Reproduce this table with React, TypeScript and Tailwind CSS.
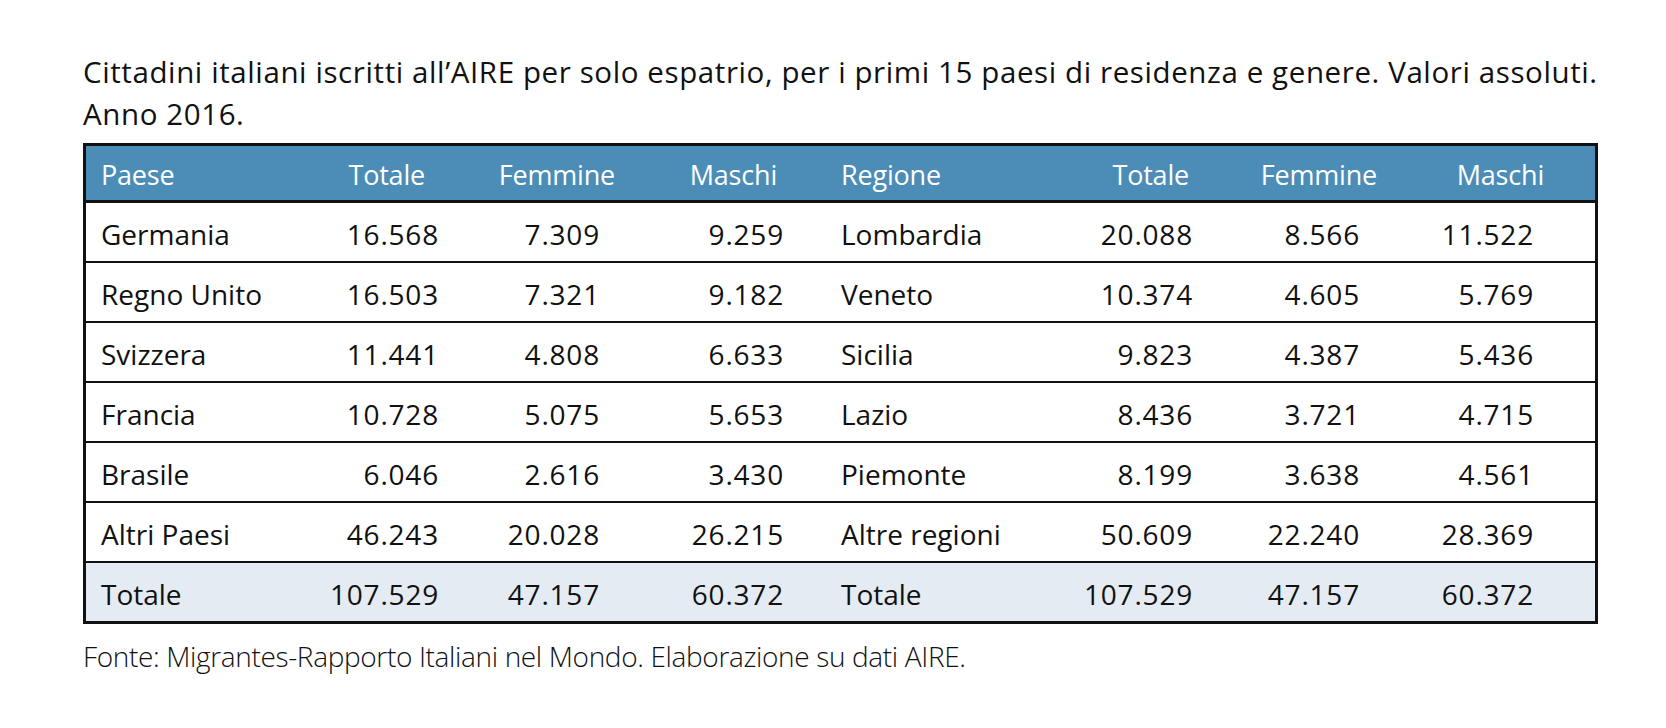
import React from "react";

type Row = [string, string, string, string, string, string, string, string];

const rows: Row[] = [
  ["Germania", "16.568", "7.309", "9.259", "Lombardia", "20.088", "8.566", "11.522"],
  ["Regno Unito", "16.503", "7.321", "9.182", "Veneto", "10.374", "4.605", "5.769"],
  ["Svizzera", "11.441", "4.808", "6.633", "Sicilia", "9.823", "4.387", "5.436"],
  ["Francia", "10.728", "5.075", "5.653", "Lazio", "8.436", "3.721", "4.715"],
  ["Brasile", "6.046", "2.616", "3.430", "Piemonte", "8.199", "3.638", "4.561"],
  ["Altri Paesi", "46.243", "20.028", "26.215", "Altre regioni", "50.609", "22.240", "28.369"],
];

const total: Row = ["Totale", "107.529", "47.157", "60.372", "Totale", "107.529", "47.157", "60.372"];

const grid = "grid grid-cols-[216px_150px_170px_180px_200px_210px_170px_213px]";

function DataRow({ r, last }: { r: Row; last?: boolean }) {
  return (
    <div
      className={`${grid} items-center pt-[4px] whitespace-nowrap ${last ? "h-[58px] bg-[#e4ebf2]" : "h-[60px] border-b-2 border-[#111]"}`}
    >
      <div className="pl-[15px]">{r[0]}</div>
      <div className="text-right pr-[13px] tracking-[0.8px]">{r[1]}</div>
      <div className="text-right pr-[22px] tracking-[0.8px]">{r[2]}</div>
      <div className="text-right pr-[18px] tracking-[0.8px]">{r[3]}</div>
      <div className="pl-[39px]">{r[4]}</div>
      <div className="text-right pr-[19px] tracking-[0.8px]">{r[5]}</div>
      <div className="text-right pr-[22px] tracking-[0.8px]">{r[6]}</div>
      <div className="text-right pr-[61px] tracking-[0.8px]">{r[7]}</div>
    </div>
  );
}

export default function App() {
  return (
    <div className="w-[1666px] h-[728px] bg-white text-[#111111] font-['Open_Sans',sans-serif]">
      <div className="pl-[83px] pt-[51px]">
        <p className="text-[29.5px] leading-[42px] tracking-[0.6px] whitespace-nowrap">
          Cittadini italiani iscritti all’AIRE per solo espatrio, per i primi 15 paesi di residenza e genere. Valori assoluti.
          <br />
          Anno 2016.
        </p>
        <div className="mt-[8px] w-[1515px] border-[3px] border-[#111] text-[28px] leading-[40px]">
          <div className={`${grid} h-[57px] items-center pt-[4px] bg-[#4b8db6] text-white text-[27px] tracking-[-0.2px] border-b-[3px] border-[#111] whitespace-nowrap`}>
            <div className="pl-[15px]">Paese</div>
            <div className="text-right pr-[27px]">Totale</div>
            <div className="text-right pr-[7px]">Femmine</div>
            <div className="text-right pr-[25px]">Maschi</div>
            <div className="pl-[39px]">Regione</div>
            <div className="text-right pr-[23px]">Totale</div>
            <div className="text-right pr-[5px]">Femmine</div>
            <div className="text-right pr-[51px]">Maschi</div>
          </div>
          {rows.map((r) => (
            <DataRow key={r[0]} r={r} />
          ))}
          <DataRow r={total} last />
        </div>
        <p className="mt-[12px] text-[28px] leading-[40px] font-light tracking-[-0.35px] whitespace-nowrap">
          Fonte: Migrantes-Rapporto Italiani nel Mondo. Elaborazione su dati AIRE.
        </p>
      </div>
    </div>
  );
}
